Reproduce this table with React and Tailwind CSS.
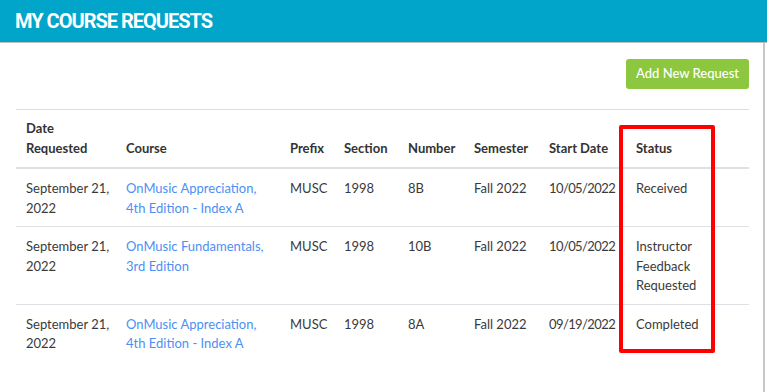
import React from "react";

const rows = [
  {
    date: ["September 21,", "2022"],
    course: ["OnMusic Appreciation,", "4th Edition - Index A"],
    prefix: "MUSC",
    section: "1998",
    number: "8B",
    semester: "Fall 2022",
    start: "10/05/2022",
    status: ["Received"],
  },
  {
    date: ["September 21,", "2022"],
    course: ["OnMusic Fundamentals,", "3rd Edition"],
    prefix: "MUSC",
    section: "1998",
    number: "10B",
    semester: "Fall 2022",
    start: "10/05/2022",
    status: ["Instructor", "Feedback", "Requested"],
  },
  {
    date: ["September 21,", "2022"],
    course: ["OnMusic Appreciation,", "4th Edition - Index A"],
    prefix: "MUSC",
    section: "1998",
    number: "8A",
    semester: "Fall 2022",
    start: "09/19/2022",
    status: ["Completed"],
  },
];

const Lines = ({ items }) => (
  <>
    {items.map((t) => (
      <div key={t} className="whitespace-nowrap">
        {t}
      </div>
    ))}
  </>
);

export default function App() {
  return (
    <div className="w-[767px] h-[392px] overflow-hidden bg-white font-['Lato',sans-serif]">
      {/* title bar */}
      <div className="h-[43px] bg-[#00a5c9] border-b border-[#bdbdbd] px-[15px] flex items-center">
        <h1 className="text-white font-bold text-[20px] tracking-[-1px] font-['Roboto',sans-serif] leading-none">
          MY COURSE REQUESTS
        </h1>
      </div>

      <div className="relative mr-[2px] h-[349px] border-r-2 border-[#c8c8c8] pl-[16px] pr-[14px]">
        <div className="flex justify-end pt-[16px] pb-[20px]">
          <button className="h-[30px] px-[10px] bg-[#8dc63f] text-white text-[13px] rounded-[3px] font-medium">
            Add New Request
          </button>
        </div>

        <table className="w-[733px] border-t border-[#dddddd] text-[13px] leading-[19.5px] text-[#3a3a3a] table-fixed border-collapse">
          <colgroup>
            <col className="w-[100px]" />
            <col className="w-[164px]" />
            <col className="w-[54px]" />
            <col className="w-[64px]" />
            <col className="w-[66px]" />
            <col className="w-[75px]" />
            <col className="w-[87px]" />
            <col className="w-[123px]" />
          </colgroup>
          <thead>
            <tr className="border-b-2 border-[#dde0e4] text-left align-bottom font-bold text-[#333]">
              <th className="py-[9px] px-[10px] font-bold">
                <div>Date</div>
                <div>Requested</div>
              </th>
              <th className="py-[9px] px-[10px] font-bold">Course</th>
              <th className="py-[9px] px-[10px] font-bold">Prefix</th>
              <th className="py-[9px] px-[10px] font-bold">Section</th>
              <th className="py-[9px] px-[10px] font-bold">Number</th>
              <th className="py-[9px] px-[10px] font-bold">Semester</th>
              <th className="py-[9px] px-[10px] font-bold whitespace-nowrap">Start Date</th>
              <th className="py-[9px] px-[10px] font-bold">Status</th>
            </tr>
          </thead>
          <tbody>
            {rows.map((r, i) => (
              <tr
                key={i}
                className={`align-top ${i < rows.length - 1 ? "border-b border-[#dde0e4]" : ""}`}
              >
                <td className="pt-[10px] pb-[8px] px-[10px]">
                  <Lines items={r.date} />
                </td>
                <td className="pt-[10px] pb-[8px] px-[10px] text-[#4d8ff5]">
                  <Lines items={r.course} />
                </td>
                <td className="pt-[10px] pb-[8px] px-[10px]">{r.prefix}</td>
                <td className="pt-[10px] pb-[8px] px-[10px]">{r.section}</td>
                <td className="pt-[10px] pb-[8px] px-[10px]">{r.number}</td>
                <td className="pt-[10px] pb-[8px] px-[10px] whitespace-nowrap">{r.semester}</td>
                <td className="pt-[10px] pb-[8px] px-[10px] tracking-[-0.6px] whitespace-nowrap">{r.start}</td>
                <td className="pt-[10px] pb-[8px] px-[10px]">
                  <Lines items={r.status} />
                </td>
              </tr>
            ))}
          </tbody>
        </table>

        {/* annotation box */}
        <div className="absolute left-[619px] top-[82px] w-[96px] h-[228px] border-[4px] border-[#ff0000] rounded-[2px]" />
      </div>
    </div>
  );
}
